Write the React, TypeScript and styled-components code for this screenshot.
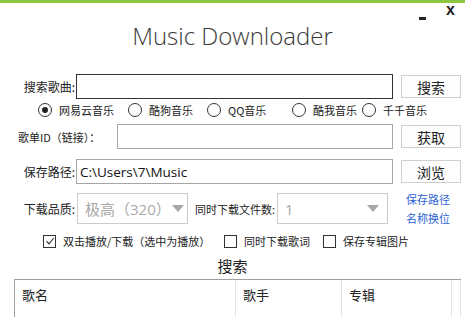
import styled, { createGlobalStyle } from "styled-components";

const GlobalStyle = createGlobalStyle`
  html, body {
    margin: 0;
    padding: 0;
    background: #fff;
  }
  * {
    box-sizing: border-box;
  }
`;

const CJK = `"Noto Sans CJK SC", "Noto Sans", sans-serif`;

const sources = [
  { name: "网易云音乐", width: 90, checked: true },
  { name: "酷狗音乐", width: 79, checked: false },
  { name: "QQ音乐", width: 85, checked: false },
  { name: "酷我音乐", width: 70, checked: false },
  { name: "千千音乐", width: 70, checked: false },
];

const options = [
  { name: "双击播放/下载（选中为播放）", width: 181, checked: true },
  { name: "同时下载歌词", width: 99, checked: false },
  { name: "保存专辑图片", width: 120, checked: false },
];

const columns = [
  { name: "歌名", width: 221 },
  { name: "歌手", width: 106 },
  { name: "专辑", width: 110 },
  { name: "", width: 9 },
];

const App = () => {
  return (
    <>
      <GlobalStyle />
      <Window>
        <ControlBar>
          <Minimize />
          <Close>x</Close>
        </ControlBar>
        <Title>Music Downloader</Title>

        <Form>
          <Row $top={19} $height={25}>
            <Label $width={76}>搜索歌曲:</Label>
            <TextInput $dark />
            <Button>搜索</Button>
          </Row>

          <RadioRow>
            {sources.map((s) => (
              <Choice key={s.name} $width={s.width}>
                <RadioCircle $checked={s.checked} />
                <ChoiceText>{s.name}</ChoiceText>
              </Choice>
            ))}
          </RadioRow>

          <Row $top={5} $height={25}>
            <Label $width={117} $left $small>
              歌单ID（链接）：
            </Label>
            <TextInput />
            <Button>获取</Button>
          </Row>

          <Row $top={10} $height={25}>
            <Label $width={76}>保存路径:</Label>
            <TextInput value="C:\Users\7\Music" readOnly />
            <Button>浏览</Button>
          </Row>

          <Row $top={9} $height={31}>
            <Label $width={76}>下载品质:</Label>
            <Select $width={111}>
              <SelectText>极高（320）</SelectText>
              <Arrow />
            </Select>
            <Label $width={88} $left $pad={7} $small>
              同时下载文件数:
            </Label>
            <Select $width={111} $spread>
              <SelectText>1</SelectText>
              <Arrow />
            </Select>
            <LinkBox>
              <span>保存路径</span>
              <span>名称换位</span>
            </LinkBox>
          </Row>

          <CheckRow>
            {options.map((o) => (
              <Choice key={o.name} $width={o.width}>
                <CheckBox>
                  {o.checked && (
                    <svg width="10" height="10" viewBox="0 0 10 10">
                      <path
                        d="M1.5 5.2 L4 7.8 L8.8 2"
                        fill="none"
                        stroke="#333"
                        strokeWidth="1.1"
                      />
                    </svg>
                  )}
                </CheckBox>
                <ChoiceText>{o.name}</ChoiceText>
              </Choice>
            ))}
          </CheckRow>

          <SectionTitle>搜索</SectionTitle>

          <Table>
            <HeaderRow>
              {columns.map((c, i) => (
                <HeaderCell key={i} $width={c.width}>
                  {c.name}
                </HeaderCell>
              ))}
            </HeaderRow>
          </Table>
        </Form>
      </Window>
    </>
  );
};

export default App;

/* -------- styles -------- */

const Window = styled.div`
  width: 465px;
  height: 317px;
  overflow: hidden;
  background: #fff;
  border-top: 3px solid #8cc63e;
`;

const ControlBar = styled.div`
  height: 22px;
  display: flex;
  justify-content: flex-end;
  align-items: flex-start;
  gap: 20px;
  padding-right: 10px;
  font-family: "Liberation Sans", Arial, sans-serif;
  font-weight: 700;
  color: #222;
`;

const Minimize = styled.span`
  width: 7px;
  height: 3px;
  margin-top: 14px;
  background: #222;
`;

const Close = styled.span`
  font-size: 16px;
  line-height: 16px;
  margin-top: -1px;
`;

const Title = styled.h1`
  margin: 0;
  height: 30px;
  line-height: 22px;
  text-align: center;
  font-family: "Open Sans", sans-serif;
  font-weight: 300;
  font-size: 24px;
  color: #3a3a3a;
`;

const Form = styled.div`
  display: flex;
  flex-direction: column;
`;

const Row = styled.div<{ $top: number; $height: number }>`
  flex: none;
  display: flex;
  align-items: center;
  margin-top: ${({ $top }) => $top}px;
  height: ${({ $height }) => $height}px;
  padding-right: 4px;
`;

const Label = styled.label<{
  $width: number;
  $left?: boolean;
  $pad?: number;
  $small?: boolean;
}>`
  flex: none;
  width: ${({ $width }) => $width}px;
  padding-left: ${({ $left, $pad }) => ($left ? ($pad ?? 18) : 0)}px;
  text-align: ${({ $left }) => ($left ? "left" : "right")};
  padding-right: 1px;
  font-family: ${CJK};
  font-size: ${({ $small }) => ($small ? 11 : 12)}px;
  color: #222;
  white-space: nowrap;
`;

const TextInput = styled.input<{ $dark?: boolean }>`
  flex: 1;
  min-width: 0;
  height: 100%;
  border: 1px solid ${({ $dark }) => ($dark ? "#333" : "#a6a6a6")};
  padding: 0 3px;
  font-family: "Open Sans", sans-serif;
  font-size: 13.5px;
  color: #111;
  outline: none;
`;

const Button = styled.button`
  flex: none;
  width: 60px;
  height: 23px;
  margin-left: 8px;
  border: 1px solid #cfcfcf;
  background: #fdfdfd;
  font-family: ${CJK};
  font-size: 14px;
  line-height: 1;
  color: #222;
  padding: 0;
`;

const RadioRow = styled.div`
  flex: none;
  display: flex;
  align-items: center;
  margin-top: 1px;
  height: 19px;
  padding-left: 38px;
`;

const Choice = styled.div<{ $width: number }>`
  flex: none;
  width: ${({ $width }) => $width}px;
  display: flex;
  align-items: center;
  gap: 7px;
`;

const RadioCircle = styled.span<{ $checked: boolean }>`
  flex: none;
  width: 14px;
  height: 14px;
  border-radius: 50%;
  border: 1px solid #333;
  display: flex;
  align-items: center;
  justify-content: center;

  &::after {
    content: "";
    display: ${({ $checked }) => ($checked ? "block" : "none")};
    width: 6px;
    height: 6px;
    border-radius: 50%;
    background: #222;
  }
`;

const ChoiceText = styled.span`
  font-family: ${CJK};
  font-size: 11px;
  color: #222;
  white-space: nowrap;
`;

const Select = styled.div<{ $width: number; $spread?: boolean }>`
  flex: none;
  width: ${({ $width }) => $width}px;
  height: 100%;
  margin-left: 1px;
  border: 1px solid #cccccc;
  display: flex;
  align-items: center;
  justify-content: ${({ $spread }) => ($spread ? "space-between" : "flex-start")};
  padding: 0 8px 0 7px;
  gap: 1px;
`;

const SelectText = styled.span`
  font-family: "Open Sans", ${CJK};
  font-size: 15px;
  color: #a8a8a8;
  white-space: nowrap;
`;

const Arrow = styled.span`
  width: 0;
  height: 0;
  border-left: 6px solid transparent;
  border-right: 6px solid transparent;
  border-top: 7px solid #a8a8a8;
`;

const LinkBox = styled.div`
  flex: none;
  margin-left: 18px;
  display: flex;
  flex-direction: column;
  gap: 3px;
  font-family: ${CJK};
  font-size: 11px;
  line-height: 16px;
  color: #2a5fd1;
`;

const CheckRow = styled.div`
  flex: none;
  display: flex;
  align-items: center;
  margin-top: 8px;
  height: 18px;
  padding-left: 43px;
`;

const CheckBox = styled.span`
  flex: none;
  width: 13px;
  height: 13px;
  border: 1px solid #333;
  display: flex;
  align-items: center;
  justify-content: center;
`;

const SectionTitle = styled.div`
  flex: none;
  margin-top: 5px;
  height: 22px;
  line-height: 22px;
  text-align: center;
  font-family: ${CJK};
  font-size: 15px;
  color: #222;
`;

const Table = styled.div`
  flex: none;
  margin: 2px 4px 0 14px;
  border: 1px solid #a0a0a0;
  height: 80px;
`;

const HeaderRow = styled.div`
  display: flex;
  height: 40px;
`;

const HeaderCell = styled.div<{ $width: number }>`
  flex: none;
  width: ${({ $width }) => $width}px;
  border-right: 1px solid #e3e3e3;
  padding: 5px 0 0 7px;
  font-family: ${CJK};
  font-size: 13px;
  color: #222;
`;
